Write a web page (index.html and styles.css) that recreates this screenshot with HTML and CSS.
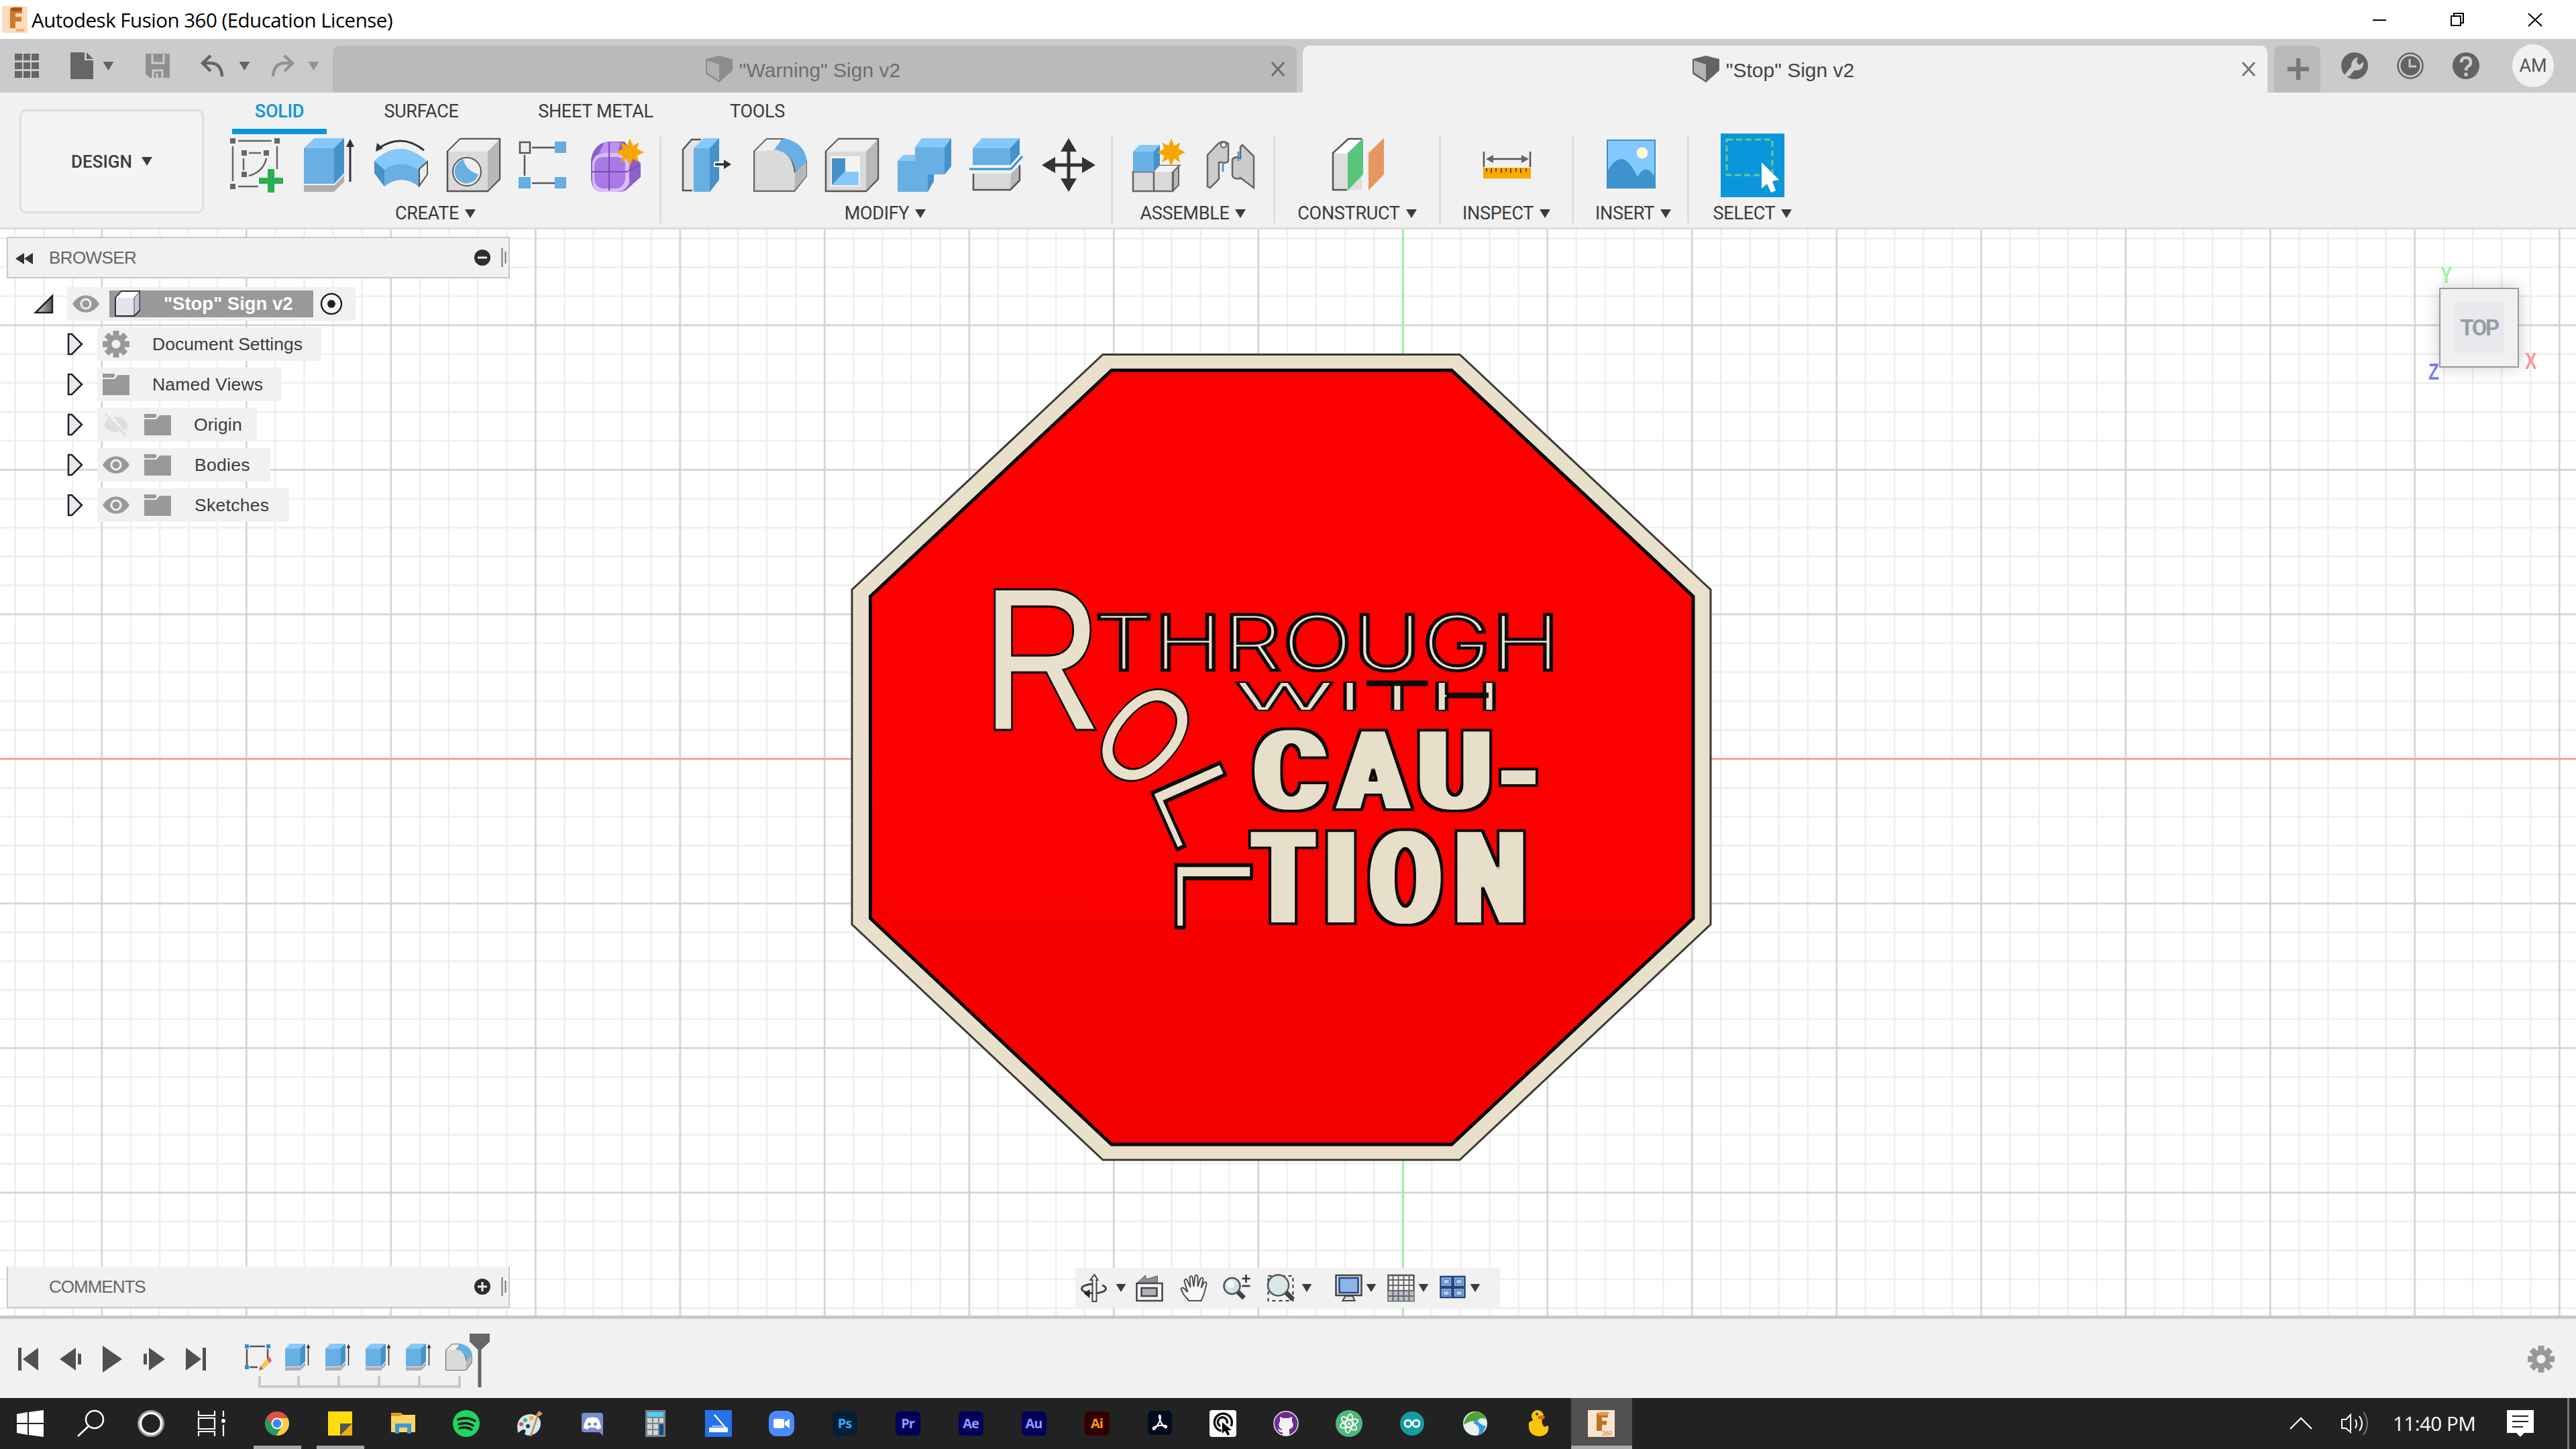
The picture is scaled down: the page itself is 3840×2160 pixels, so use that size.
FILE: index.html
```html
<!DOCTYPE html>
<html lang="en">
<head>
<meta charset="utf-8">
<title>Autodesk Fusion 360 (Education License)</title>
<link rel="stylesheet" href="styles.css">
</head>
<body>
<svg class="defs" width="0" height="0" aria-hidden="true">
  <defs>
    <symbol id="caret" viewBox="0 0 16 13"><path d="M0 0h16L8 13z" fill="currentColor"/></symbol>
    <symbol id="doc-cube" viewBox="0 0 40 40"><path d="M0 5 20 0 40 5 40 22 20 40 0 27z" fill="var(--cube-dark)"/><path d="M2 7 20 13V37L2 25z" fill="var(--cube-light)"/></symbol>
    <symbol id="close" viewBox="0 0 22 22"><path d="M2 1 20 21M20 1 2 21" stroke="currentColor" stroke-width="3" fill="none"/></symbol>
    <symbol id="gear" viewBox="-20 -20 40 40"><g fill="currentColor"><rect x="-4.5" y="-20" width="9" height="40"/><rect x="-4.5" y="-20" width="9" height="40" transform="rotate(45)"/><rect x="-4.5" y="-20" width="9" height="40" transform="rotate(90)"/><rect x="-4.5" y="-20" width="9" height="40" transform="rotate(135)"/><circle r="14"/></g><circle r="6.5" fill="#f1f1f1"/></symbol>
    <symbol id="eye" viewBox="0 0 40 26"><path d="M0 13C10-4 30-4 40 13 30 30 10 30 0 13z" fill="#999"/><circle cx="20" cy="13" r="7" fill="none" stroke="#f1f1f1" stroke-width="3"/></symbol>
    <symbol id="eye-off" viewBox="0 0 40 34"><path d="M2 18Q5 10 10 8L25 28Q10 30 2 18zM16 5Q32 4 38 18 36 23 32 26z" fill="#dedede"/><path d="M4 1 34 33" stroke="#dedede" stroke-width="3"/></symbol>
    <symbol id="folder" viewBox="0 0 40 34"><path d="M0 1h17l2 3-3 3H0z" fill="#999"/><path d="M0 9h18l5-6h17v30H0z" fill="#999"/></symbol>
    <symbol id="expand" viewBox="0 0 24 34"><path d="M2 2h5L22 17 7 32H2z" fill="#e8e9ee" stroke="#222" stroke-width="2.5"/></symbol>
    <symbol id="extrude" viewBox="0 0 80 80"><path d="M2 15 18 0H62V52L47 68H2z" fill="#68b0e4"/><path d="M2 15 18 0H62L47 15z" fill="#87c8fa"/><path d="M47 15 62 0V52L47 68z" fill="#4592cb"/><path d="M2 70H48L62 55V65L47 80H2z" fill="#aeaeae"/><path d="M71 65V8" stroke="#333" stroke-width="3"/><path d="M65 13 71 1 77 13z" fill="#333"/></symbol>
    <symbol id="fillet" viewBox="0 0 80 80"><path d="M1 20 20 1H45L35 14C55 22 60 35 62 50L79 35V56L61 79H1z" fill="#dadada" stroke="#666" stroke-width="2.5"/><path d="M2 20 20 2H42L31 17Q16 20 2 20z" fill="#efefef"/><path d="M62 50 79 35V56L61 78z" fill="#b8b8b8"/><path d="M31 17 45 0Q76 6 80 34L64 50Q58 21 31 17z" fill="#68b0e4"/></symbol>
    <symbol id="star" viewBox="-20 -20 40 40"><path d="M0-20 4-9 13-14 10-5 20 0 10 5 13 14 4 9 0 20-4 9-13 14-10 5-20 0-10-5-13-14-4-9z" fill="#f9a500"/></symbol>
    <pattern id="minor" width="43.1" height="43.1" patternUnits="userSpaceOnUse" x="2089.8" y="1129.8"><path d="M1.5 0V43.1M0 1.5H43.1" stroke="#000" stroke-opacity=".065" stroke-width="2.4"/></pattern>
    <pattern id="major" width="215.5" height="215.5" patternUnits="userSpaceOnUse" x="2089.8" y="1129.8"><path d="M1.5 0V215.5M0 1.5H215.5" stroke="#000" stroke-opacity=".12" stroke-width="2.6"/></pattern>
    <linearGradient id="red" x1="0" y1="0" x2="0" y2="1"><stop offset=".4" stop-color="#f00"/><stop offset="1" stop-color="#f40000"/></linearGradient>
    <filter id="heavy" filterUnits="userSpaceOnUse" x="1840" y="1050" width="480" height="360" color-interpolation-filters="sRGB">
      <feMorphology in="SourceAlpha" operator="dilate" radius="7 0" result="body"/>
      <feMorphology in="body" operator="dilate" radius="2" result="outer"/>
      <feMorphology in="body" operator="erode" radius="2" result="inner"/>
      <feFlood flood-color="#0a0a08"/><feComposite in2="outer" operator="in" result="edge"/>
      <feFlood flood-color="#e8dfca"/><feComposite in2="inner" operator="in" result="face"/>
      <feMerge><feMergeNode in="edge"/><feMergeNode in="face"/></feMerge>
    </filter>
  </defs>
</svg>

<header class="titlebar">
  <svg class="app-logo" viewBox="0 0 38 40"><rect width="38" height="40" fill="#fbdcbc"/><path d="M12 4h18v7H20v5h9v7h-9v10h-8z" fill="#d17a2c"/><path d="M12 4l3-2h15v3l-3 3H16z" fill="#a9550f"/><path d="M21 34h12v4H21z" fill="#f6ad6a"/></svg>
  <span class="title">Autodesk Fusion 360 (Education License)</span>
  <div class="window-controls">
    <svg viewBox="0 0 22 22"><path d="M1 12h20" stroke="#000" stroke-width="2"/></svg>
    <svg viewBox="0 0 22 22"><path d="M2 6h14v14H2zM6 6V2h14v14h-4" fill="none" stroke="#000" stroke-width="2"/></svg>
    <svg viewBox="0 0 22 22"><path d="M1 2 21 21M21 2 1 21" stroke="#000" stroke-width="2"/></svg>
  </div>
</header>

<nav class="tabbar">
  <div class="quick">
    <svg class="q" viewBox="0 0 36 36"><path d="M0 0h11v10H0zm13 0h10v10H13zm12 0h11v10H25zM0 13h11v10H0zm13 0h10v10H13zm12 0h11v10H25zM0 26h11v10H0zm13 0h10v10H13zm12 0h11v10H25z" fill="#666"/></svg>
    <svg class="q file" viewBox="0 0 34 40"><path d="M0 0h21v12h13v28H0z" fill="#666"/><path d="M24 0 34 10H24z" fill="#666"/></svg>
    <svg class="c"><use href="#caret"/></svg>
    <svg class="q" viewBox="0 0 36 36"><path d="M0 0h36v36H6L0 30z" fill="#8f8f8f"/><path d="M10 1v13h17V1M11 36V25h14v11M17 29v7" fill="none" stroke="#cbcbcb" stroke-width="3"/></svg>
    <svg class="q" viewBox="0 0 36 36"><path d="M15 3 3 14 15 26M3 14H14Q31 14 32 34" fill="none" stroke="#666" stroke-width="4.5"/></svg>
    <svg class="c"><use href="#caret"/></svg>
    <svg class="q" viewBox="0 0 36 36"><path d="M20 3 32 14 20 26M32 14H21Q4 14 3 34" fill="none" stroke="#929292" stroke-width="4.5"/></svg>
    <svg class="c dim"><use href="#caret"/></svg>
  </div>
  <div class="tab inactive"><div class="tab-label"><svg><use href="#doc-cube"/></svg><span>"Warning" Sign v2</span></div><svg class="x"><use href="#close"/></svg></div>
  <div class="tab active"><div class="tab-label"><svg><use href="#doc-cube"/></svg><span>"Stop" Sign v2</span></div><svg class="x"><use href="#close"/></svg></div>
  <div class="tab add"><svg viewBox="0 0 34 34"><path d="M17 1V33M1 17H33" stroke="#777" stroke-width="6.5"/></svg></div>
  <div class="account">
    <svg viewBox="0 0 40 40"><circle cx="20" cy="20" r="20" fill="#636363"/><path d="M9 34 18 23" stroke="#cbcbcb" stroke-width="7" /><path d="M16 25Q12 12 25 7L23 15 27 19 33 14Q34 27 21 27z" fill="#cbcbcb"/><path d="M2 40 14 28" stroke="#cbcbcb" stroke-width="5"/></svg>
    <svg viewBox="0 0 40 40"><circle cx="20" cy="20" r="18.5" fill="none" stroke="#636363" stroke-width="2.5"/><circle cx="20" cy="20" r="14.5" fill="#636363"/><path d="M19 10V21H29" fill="none" stroke="#cbcbcb" stroke-width="3"/></svg>
    <svg viewBox="0 0 40 40"><circle cx="20" cy="20" r="20" fill="#636363"/><path d="M13 15Q13 8 20 8T27 15Q27 19 23 21 20 23 20 27" fill="none" stroke="#cbcbcb" stroke-width="4.5"/><circle cx="20" cy="33" r="2.8" fill="#cbcbcb"/></svg>
    <span class="avatar">AM</span>
  </div>
</nav>

<section class="ribbon">
  <button class="workspace">DESIGN <svg class="c"><use href="#caret"/></svg></button>
  <div class="ribbon-main">
    <div class="ribbon-tabs"><span class="rt on">SOLID</span><span class="rt">SURFACE</span><span class="rt">SHEET METAL</span><span class="rt">TOOLS</span></div>
    <div class="groups">
      <div class="group create">
        <div class="icons">
          <svg viewBox="0 0 80 80"><g fill="none" stroke="#666" stroke-width="2.5"><path d="M12 4H62M4 12V64M70 12V46M12 72H42M28 22H46M20 30V48M54 30Q50 50 28 56"/></g><path d="M0 0h8v8H0zM66 0h8v8h-8zM0 68h8v8H0zM17 18h8v8h-8zM50 18h8v8h-8zM17 50h8v8h-8z" fill="#666"/><path d="M56 46h10v13h13v9H66v13H56V68H43v-9h13z" fill="#27b050"/></svg>
          <svg><use href="#extrude"/></svg>
          <svg viewBox="0 0 80 80"><path d="M0 34Q38-2 78 34L66 47V72Q40 52 15 72L0 52z" fill="#68b0e4"/><path d="M0 34Q38-2 78 34L66 47Q40 30 15 47z" fill="#87c8fa"/><path d="M0 34 15 47V72L0 52z" fill="#4592cb"/><path d="M67 46 79 35V54L67 71z" fill="#eee" stroke="#555" stroke-width="2"/><path d="M74 18Q42-8 8 14" fill="none" stroke="#333" stroke-width="3"/><path d="M2 20 4 7 13 15z" fill="#333"/></svg>
          <svg viewBox="0 0 80 80"><path d="M1 20 20 1H79V61L61 79H1z" fill="#dadada" stroke="#555" stroke-width="2.5"/><path d="M2 20 20 2H77L61 20z" fill="#efefef"/><path d="M61 20 78 3V60L61 78z" fill="#b8b8b8"/><circle cx="30" cy="50" r="21" fill="#eee" stroke="#555" stroke-width="2"/><path d="M25 32Q28 48 47 54A18 18 0 1 1 25 32z" fill="#68b0e4"/></svg>
          <svg viewBox="0 0 80 80"><path d="M20 14H54M9 25V56M20 67H54" stroke="#555" stroke-width="2.5"/><path d="M2 6h15v16H2z" fill="#eee" stroke="#555" stroke-width="2.5"/><path d="M54 5h17v17H54zM0 58h18v17H0zM54 58h17v17H54z" fill="#62aee5"/></svg>
          <svg viewBox="0 0 80 80"><path d="M15 8 25 5H50L74 38V58L54 76Q50 80 40 80H15Q1 78 0 60V32Q2 16 15 8z" fill="#8e5fc9"/><path d="M12 22 20 6H44L40 22z" fill="#bd92f7"/><path d="M2 36Q6 22 20 22H40Q54 22 57 36V68Q50 80 38 80H15Q2 78 2 62z" fill="#d8bcff"/><path d="M5 38Q8 28 18 28H38Q49 28 51 38V62Q48 74 38 75H17Q5 72 5 60z" fill="#a97ae4"/><path d="M27 6V78M2 50H54L72 40" fill="none" stroke="#7b4bb8" stroke-width="2"/><svg x="37" y="0" width="42" height="42"><use href="#star"/></svg></svg>
        </div><span class="gl">CREATE <svg class="c"><use href="#caret"/></svg></span>
      </div>
      <div class="group modify">
        <div class="icons">
          <svg viewBox="0 0 80 80"><path d="M3 17 16 2H32V78H3z" fill="#e4e4e4"/><path d="M30 2H16L3 17V78H17" fill="none" stroke="#555" stroke-width="2.5"/><path d="M19 80V15L35 0H57V62L43 80z" fill="#68b0e4"/><path d="M19 15 35 0H57L43 15z" fill="#87c8fa"/><path d="M43 15 57 0V62L43 80z" fill="#4592cb"/><path d="M49 39H66" stroke="#fff" stroke-width="8"/><path d="M51 39H66" stroke="#333" stroke-width="3.5"/><path d="M64 32 75 39 64 46z" fill="#333"/></svg>
          <svg><use href="#fillet"/></svg>
          <svg viewBox="0 0 80 80"><path d="M1 20 20 1H79V61L61 79H1z" fill="#dadada" stroke="#555" stroke-width="2.5"/><path d="M2 20 20 2H77L61 20z" fill="#efefef"/><path d="M61 20 78 3V60L61 78z" fill="#b8b8b8"/><path d="M8 27H52V72H8z" fill="#f4f4f4"/><path d="M10 30H30V52L10 70z" fill="#4592cb"/><path d="M10 70 29 50H50V70z" fill="#87c8fa"/></svg>
          <svg viewBox="0 0 80 80"><path d="M0 34 9 25H26V14L36 0H80V42L70 54H54V64L45 80H0z" fill="#68b0e4"/><path d="M0 34 9 25H26V34zM26 14 36 0H80L70 14z" fill="#87c8fa"/><path d="M70 14 80 0V42L70 54zM45 80V54H54V64z" fill="#4592cb"/></svg>
          <svg viewBox="0 0 80 80"><path d="M5 15 19 0H75V24L61 40H5z" fill="#68b0e4"/><path d="M5 15 19 0H75L61 15z" fill="#87c8fa"/><path d="M61 15 75 0V24L61 40z" fill="#4592cb"/><path d="M0 46H62L79 27" fill="none" stroke="#2e93dc" stroke-width="3"/><path d="M6 53H62L75 40V63L61 77H6z" fill="#d9d9d9"/><path d="M62 53 75 40V63L61 77z" fill="#b8b8b8"/><path d="M6 53V77H61L75 63V40" fill="none" stroke="#555" stroke-width="2.5"/></svg>
          <svg viewBox="0 0 80 80"><path d="M40 10V70M10 40H70" stroke="#333" stroke-width="5"/><path d="M40 0 52 20H28zM40 80 28 60H52zM0 40 20 28V52zM80 40 60 52V28z" fill="#333"/></svg>
        </div><span class="gl">MODIFY <svg class="c"><use href="#caret"/></svg></span>
      </div>
      <div class="group assemble">
        <div class="icons">
          <svg viewBox="0 0 80 80"><path d="M1 50H32V79H1zM32 50 40 41H70L60 50V79H32z" fill="#dadada" stroke="#666" stroke-width="2.5"/><path d="M32 50 40 41H68L60 50z" fill="#f2f2f2"/><path d="M61 50 69 42V70L61 78z" fill="#b8b8b8" stroke="#666" stroke-width="2"/><path d="M1 20 11 10H41V40L32 50H1z" fill="#68b0e4"/><path d="M1 20 11 10H41L32 20z" fill="#87c8fa"/><path d="M32 20 41 10V40L32 50z" fill="#4592cb"/><svg x="37" y="0" width="42" height="42"><use href="#star"/></svg></svg>
          <svg viewBox="0 0 80 80"><g stroke="#666" stroke-width="2.5" fill="#ccc"><path d="M5 25 20 9Q28 2 36 8V34Q34 38 26 36L22 36V61L9 74 5 72z"/><path d="M74 74 54 59V60Q42 62 42 54V32Q46 26 54 30V13L57 10 74 27z"/></g><circle cx="29" cy="10" r="4" fill="#eee" stroke="#666" stroke-width="2"/><path d="M28 36V50M51 20V34" stroke="#2e93dc" stroke-width="2.5"/></svg>
        </div><span class="gl">ASSEMBLE <svg class="c"><use href="#caret"/></svg></span>
      </div>
      <div class="group construct">
        <div class="icons"><svg viewBox="0 0 80 80"><path d="M1 22 24 1H44V77H1z" fill="#dedede"/><path d="M1 22 24 2H44L24 23z" fill="#fff"/><path d="M44 1H24L1 22V77H22" fill="none" stroke="#555" stroke-width="2.5"/><path d="M23 22 46 0V54L23 78z" fill="#5ac47a"/><path d="M54 22 77 0V54L54 78z" fill="#e69661"/></svg></div><span class="gl">CONSTRUCT <svg class="c"><use href="#caret"/></svg></span>
      </div>
      <div class="group inspect">
        <div class="icons"><svg viewBox="0 0 80 80"><path d="M6 20V43M75 20V43M12 31H70" stroke="#555" stroke-width="2.5" fill="none"/><path d="M9 31 20 25V37zM73 31 62 25V37z" fill="#666"/><path d="M5 44H76V60H5z" fill="#f9a900"/><path d="M10 45v5M17 45v7M24 45v5M32 45v7M39 45v5M46 45v7M54 45v5M61 45v7M69 45v5" stroke="#664b00" stroke-width="2"/></svg></div><span class="gl">INSPECT <svg class="c"><use href="#caret"/></svg></span>
      </div>
      <div class="group insert">
        <div class="icons"><svg viewBox="0 0 80 80"><path d="M5 3H76V74H5z" fill="#82c9fd" stroke="#3a8ecb" stroke-width="2"/><path d="M5 50Q15 31 26 31T50 58Q62 35 76 58V74H5z" fill="#3d93cf"/><circle cx="57" cy="22" r="8.5" fill="#fff9d0"/></svg></div><span class="gl">INSERT <svg class="c"><use href="#caret"/></svg></span>
      </div>
      <div class="group select">
        <div class="icons"><svg class="sel" viewBox="0 0 95 95"><path d="M0 0H95V95H0z" fill="#0b96db"/><path d="M9 9H77V62H9z" fill="none" stroke="#62cf86" stroke-width="3" stroke-dasharray="9 5"/><path d="M61 43V82L69 75 75 88 82 85 77 71 87 69z" fill="#fff"/></svg></div><span class="gl">SELECT <svg class="c"><use href="#caret"/></svg></span>
      </div>
    </div>
  </div>
</section>

<main class="canvas">
  <svg class="scene" viewBox="0 342 3840 1619">
    <rect y="342" width="3840" height="1619" fill="#fff"/>
    <rect y="342" width="3840" height="1619" fill="url(#minor)"/>
    <rect y="342" width="3840" height="1619" fill="url(#major)"/>
    <path d="M0 1131.3H3840" stroke="#f99" stroke-width="2.4"/>
    <path d="M2091.3 342V1961" stroke="#8df58d" stroke-width="2.4"/>
    <path d="M1644 528.5H2176L2550 879V1378L2176 1729H1644L1270 1378V879z" fill="#e9e0cb" stroke="#3a3a36" stroke-width="3"/>
    <path d="M1657 552H2164L2524 889V1369L2164 1706H1657L1297.5 1369V889z" fill="url(#red)" stroke="#000" stroke-width="5"/>
    <g class="sign-text">
      <text class="roll" font-size="300" transform="translate(1484.5 1086.500) scale(.825 1)" x="-25" y="0">R</text>
      <text class="roll" font-size="209" transform="translate(1706.7 1096) rotate(40) scale(.7 1)" x="-81.500" y="72">O</text>
      <text class="thin" font-size="161" transform="translate(1717.5 1182) rotate(66) scale(1.295 1)" x="-13.2" y="0">L</text>
      <text class="thin" font-size="163" transform="translate(1753 1289.5) rotate(90) scale(1.295 1)" x="-13.4" y="0">L</text>
      <text class="through" font-size="114" x="1631" y="999" textLength="695" lengthAdjust="spacingAndGlyphs">THROUGH</text>
      <g transform="translate(1843 1059) scale(2.45 1)"><text class="with" font-size="62" x="0 60.4 79 117" y="0">WITH</text></g>
      <path d="M2037 1018.5H2128M2156 1036.500H2219" stroke="#0a0a08" stroke-width="8"/>
      <g class="fat" filter="url(#heavy)">
        <text font-size="167" y="1207"><tspan x="1869.600" textLength="107" lengthAdjust="spacingAndGlyphs">C</tspan><tspan x="1995" textLength="104" lengthAdjust="spacingAndGlyphs">A</tspan><tspan x="2113" textLength="111" lengthAdjust="spacingAndGlyphs">U</tspan><tspan class="hyphen" x="2235" textLength="57" lengthAdjust="spacingAndGlyphs">-</tspan></text>
        <text font-size="194" y="1377"><tspan x="1867" textLength="92" lengthAdjust="spacingAndGlyphs">T</tspan><tspan x="1973.500" textLength="51" lengthAdjust="spacingAndGlyphs">I</tspan><tspan x="2042" textLength="106" lengthAdjust="spacingAndGlyphs">O</tspan><tspan x="2169.600" textLength="104" lengthAdjust="spacingAndGlyphs">N</tspan></text>
      </g>
    </g>
  </svg>

  <div class="viewcube">
    <span class="ax y">Y</span><span class="ax z">Z</span><span class="ax x">X</span>
    <div class="cube-face"><span>TOP</span></div>
  </div>

  <aside class="browser">
    <div class="panel-head">
      <svg class="rew" viewBox="0 0 26 17"><path d="M13 0V17L0 8.500zM26 0V17L13 8.500z" fill="#333"/></svg>
      <span>BROWSER</span>
      <svg class="dot" viewBox="0 0 24 24"><circle cx="12" cy="12" r="12" fill="#2e2e2e"/><path d="M5 12H19" stroke="#eee" stroke-width="3"/></svg>
      <svg class="grip" viewBox="0 0 8 28"><path d="M1.500 0V28M6.500 5V23" stroke="#777" stroke-width="2"/></svg>
    </div>
    <div class="row root">
      <svg class="tri" viewBox="0 0 30 30"><defs><linearGradient id="tg"><stop stop-color="#ddd"/><stop offset="1" stop-color="#555"/></linearGradient></defs><path d="M2 28 27 3V28z" fill="url(#tg)" stroke="#222" stroke-width="2.500"/></svg>
      <div class="pill">
        <svg class="eye"><use href="#eye"/></svg>
        <span class="name"><svg viewBox="0 0 40 40"><path d="M2 11 11 1H38V30L30 38H2z" fill="#e3e5ee" stroke="#333" stroke-width="2"/><path d="M3 11 11 2H37L30 11z" fill="#fff"/><path d="M30 11 38 2V29L30 37z" fill="#c5c8d4" stroke="#444" stroke-width="1"/></svg>"Stop" Sign v2</span>
        <svg class="radio" viewBox="0 0 34 34"><circle cx="17" cy="17" r="15" fill="#fafafa" stroke="#222" stroke-width="2.500"/><circle cx="17" cy="17" r="6" fill="#222"/></svg>
      </div>
    </div>
    <div class="row"><svg class="exp"><use href="#expand"/></svg><div class="pill"><svg class="g"><use href="#gear"/></svg><span>Document Settings</span></div></div>
    <div class="row"><svg class="exp"><use href="#expand"/></svg><div class="pill"><svg class="f"><use href="#folder"/></svg><span>Named Views</span></div></div>
    <div class="row"><svg class="exp"><use href="#expand"/></svg><div class="pill tight"><svg class="eo"><use href="#eye-off"/></svg><svg class="f"><use href="#folder"/></svg><span>Origin</span></div></div>
    <div class="row"><svg class="exp"><use href="#expand"/></svg><div class="pill"><svg class="eye"><use href="#eye"/></svg><svg class="f"><use href="#folder"/></svg><span>Bodies</span></div></div>
    <div class="row"><svg class="exp"><use href="#expand"/></svg><div class="pill"><svg class="eye"><use href="#eye"/></svg><svg class="f"><use href="#folder"/></svg><span>Sketches</span></div></div>
  </aside>

  <div class="panel-head comments">
    <span>COMMENTS</span>
    <svg class="dot" viewBox="0 0 24 24"><circle cx="12" cy="12" r="12" fill="#2e2e2e"/><path d="M5 12H19M12 5V19" stroke="#eee" stroke-width="3"/></svg>
    <svg class="grip" viewBox="0 0 8 28"><path d="M1.500 0V28M6.500 5V23" stroke="#777" stroke-width="2"/></svg>
  </div>

  <div class="navbar">
    <svg viewBox="0 0 40 40"><ellipse cx="20" cy="21" rx="18" ry="7" fill="none" stroke="#444" stroke-width="3" stroke-dasharray="62 12 12"/><path d="M18 40V8H15L21 0 26 8H24V40z" fill="#f4f4f4" stroke="#444" stroke-width="2"/><path d="M5 28 14 22V35z" fill="#222"/></svg>
    <svg class="c"><use href="#caret"/></svg>
    <svg viewBox="0 0 40 40"><path d="M1 13H39V39H1z" fill="#f8f8f8" stroke="#444" stroke-width="2.500"/><path d="M2 12 14 1 15 7 32 2V12z" fill="#8b919c" stroke="#555"/><path d="M8 20H31V32H8z" fill="#aeb2bb" stroke="#444" stroke-width="2.500"/></svg>
    <svg viewBox="0 0 40 40"><path d="M13 39 5 30 1 22Q1 19 5 20L11 26 6 10Q7 5 10 8L15 19 14 4Q16 0 18 4L20 18 22 2Q24-1 26 3V18L30 6Q33 3 34 7L31 20 35 12Q39 10 39 14L35 30 31 39z" fill="#f7f7f8" stroke="#4b4f55" stroke-width="2"/></svg>
    <svg viewBox="0 0 40 40"><path d="M21 25 31 35" stroke="#38414c" stroke-width="7"/><circle cx="13" cy="17" r="12" fill="#cfe3e3" stroke="#48525e" stroke-width="2.500"/><circle cx="11" cy="14" r="6" fill="#f4fafa"/><path d="M34 0V12M28 6H40M28 17H40" stroke="#333" stroke-width="2.500"/></svg>
    <svg viewBox="0 0 40 40"><path d="M2 2H39V39H2z" fill="none" stroke="#333" stroke-width="2" stroke-dasharray="5 5"/><path d="M28 26 39 37" stroke="#444" stroke-width="7"/><circle cx="17" cy="16" r="15.500" fill="#d5eae8" stroke="#555" stroke-width="2.500"/></svg>
    <svg class="c"><use href="#caret"/></svg>
    <svg viewBox="0 0 40 40"><path d="M1 1H39V31H1z" fill="#dadde3" stroke="#444" stroke-width="2.500"/><path d="M6 5H34V27H6z" fill="#8fb5e6" stroke="#24467f" stroke-width="2.500"/><path d="M15 32H26L29 39H11z" fill="#ddd" stroke="#444" stroke-width="2"/></svg>
    <svg class="c"><use href="#caret"/></svg>
    <svg viewBox="0 0 40 40"><path d="M1 1H39V39H1z" fill="#f4f5f8" stroke="#555" stroke-width="2.500"/><path d="M1 24H39V39H1z" fill="#b9bfcd"/><path d="M8 1V39M16 1V39M24 1V39M32 1V39M1 8H39M1 16H39M1 24H39M1 32H39" stroke="#666" stroke-width="2"/></svg>
    <svg class="c"><use href="#caret"/></svg>
    <svg viewBox="0 0 40 40"><path d="M2 3H19V18H2zM21 3H38V18H21zM2 20H19V34H2zM21 20H38V34H21z" fill="#8fb5e6" stroke="#24467f" stroke-width="2.500"/><path d="M6 7h9v7H6zM25 7h9v7h-9zM6 24h9v7H6zM25 24h9v7h-9z" fill="#b0ccf0" stroke="#4f79b5" stroke-width="1.500"/></svg>
    <svg class="c"><use href="#caret"/></svg>
  </div>
</main>

<footer class="timeline">
  <div class="transport">
    <svg viewBox="0 0 32 40"><path d="M1 3h5v34H1zM31 3V37L8 20z" fill="#505052"/></svg>
    <svg viewBox="0 0 32 40"><path d="M24 3V37L0 20zM27 12h5v16h-5z" fill="#505052"/></svg>
    <svg viewBox="0 0 32 40"><path d="M2 0V40L31 20z" fill="#505052"/></svg>
    <svg viewBox="0 0 32 40"><path d="M8 3V37L32 20zM0 12h5v16H0z" fill="#505052"/></svg>
    <svg viewBox="0 0 32 40"><path d="M1 3V37L24 20zM26 3h5v34h-5z" fill="#505052"/></svg>
  </div>
  <div class="track">
    <div class="features">
      <svg viewBox="0 0 40 40"><path d="M8 4H31M4 8V32M35 8V22M8 35H20" stroke="#555" stroke-width="2.500"/><path d="M1 1h6v6H1zM33 1h6v6h-6zM1 32h6v6H1z" fill="#2490e3"/><path d="M24 34 34 22 39 27 28 39z" fill="#fcc04c"/><path d="M34 22 37 19 41 25 38 29z" fill="#f04e58"/><path d="M22 40 24 33 28 38z" fill="#777"/></svg>
      <svg><use href="#extrude"/></svg>
      <svg><use href="#extrude"/></svg>
      <svg><use href="#extrude"/></svg>
      <svg><use href="#extrude"/></svg>
      <svg><use href="#fillet"/></svg>
    </div>
    <svg class="bracket" viewBox="0 0 302 18"><path d="M2 0V16H300V0M60 0V16M120 0V16M180 0V16M240 0V16" fill="none" stroke="#c9c9c9" stroke-width="4"/></svg>
    <svg class="marker" viewBox="0 0 30 80"><path d="M0 0H30V12L17.500 24V80H12.500V24L0 12z" fill="#666"/></svg>
  </div>
  <svg class="settings"><use href="#gear"/></svg>
</footer>

<div class="taskbar">
  <div class="system">
    <svg viewBox="0 0 40 40"><path d="M0 6 16 3V19H0zM18 3 40 0V19H18zM0 21H16V37L0 34zM18 21H40V40L18 37z" fill="#fff"/></svg>
    <svg viewBox="0 0 40 40"><circle cx="26" cy="14" r="13" fill="none" stroke="#fff" stroke-width="2.500"/><path d="M17 24 1 39" stroke="#fff" stroke-width="2.500"/></svg>
    <svg viewBox="0 0 40 40"><circle cx="20" cy="20" r="18.500" fill="none" stroke="#999" stroke-width="3"/><circle cx="20" cy="20" r="15.500" fill="none" stroke="#fff" stroke-width="3.500"/></svg>
    <svg viewBox="0 0 40 40"><path d="M1 1V8H25V1M1 12H25V28H1zM1 39V32H25V39M38 1V10M38 22V39" fill="none" stroke="#fff" stroke-width="2.200"/><circle cx="38" cy="16" r="3" fill="#fff"/></svg>
  </div>
  <div class="apps">
    <div class="app run"><svg viewBox="0 0 40 40"><circle cx="20" cy="20" r="18" fill="#de5246"/><path d="M4.400 11A18 18 0 0 0 19 38L27 24H13z" fill="#1aa260"/><path d="M20 12H36A18 18 0 0 1 19 38L27 24z" fill="#ffce44"/><circle cx="20" cy="20" r="8.500" fill="#fff"/><circle cx="20" cy="20" r="6.500" fill="#4587f0"/></svg></div>
    <div class="app run"><svg viewBox="0 0 40 40"><path d="M2 2H38V38H2z" fill="#ffdc0c"/><path d="M20 20H38L20 38z" fill="#555"/><path d="M38 20V38H20z" fill="#eab10a"/></svg></div>
    <div class="app"><svg viewBox="0 0 40 40"><path d="M2 4H17L20 8V14H2z" fill="#e09b12"/><path d="M2 9H15L19 7H38V33H2z" fill="#ffd461"/><path d="M8 35V20H32V35H26V26H14V35z" fill="#3d97dd"/></svg></div>
    <div class="app"><svg viewBox="0 0 40 40"><circle cx="20" cy="20" r="20" fill="#1ed760"/><path d="M8 14Q21 9 33 16M9 21Q21 17 30 23M10 27Q20 24 28 29" fill="none" stroke="#191414" stroke-width="3.500" stroke-linecap="round"/></svg></div>
    <div class="app"><svg viewBox="0 0 40 40"><path d="M2 24Q4 7 22 6 38 8 37 22 34 37 18 38L13 36Q17 28 10 29L3 34z" fill="#cfe8f4"/><circle cx="8" cy="21" r="3" fill="#e5473b"/><circle cx="14" cy="15" r="3" fill="#53b24c"/><circle cx="23" cy="12" r="3.500" fill="#f3b72b"/><circle cx="18" cy="24" r="3" fill="#2b3c4e"/><path d="M22 39 33 7" stroke="#dc8535" stroke-width="2.500"/><path d="M30 8 34 1 40 5 36 9z" fill="#d5985a"/></svg></div>
    <div class="app"><svg viewBox="0 0 40 40"><path d="M4 8Q4 4 8 4H32Q36 4 36 8V38L30 33H8Q4 33 4 29z" fill="#7a8bd2"/><path d="M12 12Q20 9 28 12 33 20 33 27L27 29 25 26H15L13 29 7 27Q7 20 12 12z" fill="#fff"/><circle cx="15.500" cy="21" r="2.500" fill="#7585cb"/><circle cx="24.500" cy="21" r="2.500" fill="#7585cb"/></svg></div>
    <div class="app"><svg viewBox="0 0 40 40"><path d="M5 0H35V40H5z" fill="#7b8288"/><path d="M8 3H32V10H8z" fill="#4dd0f5"/><path d="M8 12h7v7H8zM17 12h7v7h-7zM26 12h6v7h-6zM8 21h7v7H8zM17 21h7v7h-7zM8 30h7v7H8zM17 30h7v7h-7z" fill="#d3d6d9"/><path d="M26 21h6v16h-6z" fill="#124a8d"/></svg></div>
    <div class="app"><svg viewBox="0 0 40 40"><path d="M0 0H40V40H0z" fill="#2672e9"/><path d="M14 7 31 27" stroke="#fff" stroke-width="2.500"/><path d="M6 26H34V33H6z" fill="#fff"/><path d="M10 23H28V25H10z" fill="#a8c6fa"/></svg></div>
    <div class="app"><svg viewBox="0 0 40 40"><rect x="1" y="1" width="38" height="38" rx="12" fill="#4a8cff"/><rect x="8" y="13" width="16" height="14" rx="3" fill="#fff"/><path d="M25 18 32 13V27L25 22z" fill="#fff"/></svg></div>
    <div class="app"><span class="adobe ps">Ps</span></div>
    <div class="app"><span class="adobe pr">Pr</span></div>
    <div class="app"><span class="adobe pr">Ae</span></div>
    <div class="app"><span class="adobe pr">Au</span></div>
    <div class="app"><span class="adobe ai">Ai</span></div>
    <div class="app"><svg viewBox="0 0 40 40"><rect x="2" y="1" width="36" height="36" rx="6" fill="#000c1d"/><path d="M10 28C6 24 32 20 30 25S19 16 19 10 24 10 18 20 11 30 10 28z" fill="none" stroke="#fff" stroke-width="2.200"/></svg></div>
    <div class="app"><svg viewBox="0 0 40 40"><rect width="40" height="40" rx="4" fill="#fff"/><path d="M18 31A13 13 0 1 1 32 24M16 24A7 7 0 1 1 26 20" fill="none" stroke="#111" stroke-width="3.500"/><path d="M19 18V35L23 31 27 38 30 36 27 30H33z" fill="#000"/></svg></div>
    <div class="app"><svg viewBox="0 0 40 40"><circle cx="20" cy="20" r="18" fill="#6c2c93" stroke="#ece6f0" stroke-width="1.500"/><path d="M11 10 16 12H24L29 10V17Q34 26 25 28V38H15V33Q9 34 8 27 12 31 15 29 6 25 11 17z" fill="#f5f2f7"/></svg></div>
    <div class="app"><svg viewBox="0 0 40 40"><circle cx="20" cy="20" r="20" fill="#4fb87c"/><g fill="none" stroke="#fff" stroke-width="1.800"><ellipse cx="20" cy="20" rx="5" ry="14" transform="rotate(10 20 20)"/><ellipse cx="20" cy="20" rx="5" ry="14" transform="rotate(70 20 20)"/><ellipse cx="20" cy="20" rx="5" ry="14" transform="rotate(130 20 20)"/></g><circle cx="20" cy="20" r="2" fill="#fff"/></svg></div>
    <div class="app"><svg viewBox="0 0 40 40"><circle cx="20" cy="20" r="18" fill="#159ba1"/><circle cx="14" cy="20" r="5" fill="none" stroke="#fff" stroke-width="2.800"/><circle cx="26" cy="20" r="5" fill="none" stroke="#fff" stroke-width="2.800"/></svg></div>
    <div class="app"><svg viewBox="0 0 40 40"><circle cx="20" cy="20" r="18" fill="#e6f0f4"/><path d="M3 22Q5 5 22 2 34 5 36 14 26 8 22 20 17 12 3 22z" fill="#4fa52c"/><path d="M21 8Q22 20 36 24 32 36 24 38 30 24 18 20z" fill="#359bdc"/></svg></div>
    <div class="app"><svg viewBox="0 0 40 40"><circle cx="19" cy="9" r="9" fill="#fbc70d"/><path d="M6 22Q5 17 11 16L14 12H26Q24 20 29 25L35 23Q37 38 21 39 5 38 6 22z" fill="#fbc70d"/><path d="M20 9Q29 6 30 11 27 16 20 13z" fill="#e8651b"/><circle cx="18" cy="6" r="2" fill="#333"/></svg></div>
    <div class="app current run"><svg viewBox="0 0 40 40"><path d="M0 0H40V40H0z" fill="#fbe4cf"/><path d="M13 5H30V11H21V16H28V22H21V31H13z" fill="#c06f28"/><path d="M13 5 16 3H31L30 8H17z" fill="#e29b54"/><text x="21" y="38" font-size="9" font-family="Roboto, sans-serif" fill="#e07a22">360</text></svg></div>
  </div>
  <div class="tray">
    <svg class="chev" viewBox="0 0 34 18"><path d="M1 17 17 1 33 17" fill="none" stroke="#fff" stroke-width="2.200"/></svg>
    <svg class="vol" viewBox="0 0 40 40"><path d="M1 14H7L14 7V33L7 27H1z" fill="none" stroke="#fff" stroke-width="2"/><path d="M21 14Q25 20 21 27M27 9Q35 20 27 31" fill="none" stroke="#fff" stroke-width="2"/><path d="M33 3Q45 20 33 37" fill="none" stroke="#777" stroke-width="2"/></svg>
    <span class="clock">11:40 PM</span>
    <svg class="note" viewBox="0 0 40 40"><path d="M0 0H40V34H26L20 40 14 34H0z" fill="#fff"/><path d="M8 9H32M8 17H32M8 25H24" stroke="#222" stroke-width="2"/></svg>
    <i class="desk"></i>
  </div>
</div>
</body>
</html>
```
FILE: styles.css
```css
* { box-sizing: border-box; }
body {
  margin: 0;
  width: 3840px;
  height: 2160px;
  overflow: hidden;
  display: flex;
  flex-direction: column;
  font-family: "Liberation Sans", Arial, sans-serif;
  color: #3c3c3c;
  background: #fff;
}
.defs { position: absolute; }
svg { display: block; flex: none; overflow: visible; }
.c { width: 16px; height: 13px; }

/* window title */
.titlebar { height: 58px; flex: none; display: flex; align-items: center; padding-left: 3px; }
.app-logo { width: 38px; height: 40px; }
.title { margin-left: 6px; font: 29.5px "Open Sans", sans-serif; color: #000; white-space: nowrap; padding-bottom: 0; letter-spacing: -0.5px; }
.window-controls { margin-left: auto; display: flex; gap: 94px; padding-right: 50px; }
.window-controls svg { width: 22px; height: 22px; }

/* document tabs */
.tabbar { height: 80px; flex: none; display: flex; align-items: flex-end; background: #cbcbcb; }
.quick { width: 496px; height: 80px; display: grid; grid-template-columns: 83px 48px 64px 82px 57px 48px 55px 20px; padding-left: 22px; align-items: center; color: #636363; }
.quick .q { width: 36px; height: 36px; }
.quick .file { width: 34px; height: 40px; }
.quick .c { width: 17px; }
.quick .dim { color: #929292; }
.tab { height: 70px; border-radius: 10px 10px 0 0; display: flex; align-items: center; font-size: 30px; }
.tab-label { flex: 1; display: flex; align-items: center; justify-content: center; gap: 10px; padding-left: 4px; padding-top: 3px; }
.tab-label svg { width: 40px; height: 40px; margin-top: -4px; }
.tab .x { width: 22px; height: 22px; margin-right: 17px; }
.inactive { width: 1437px; background: #bababa; color: #6e6e6e; --cube-dark: #8d8d8d; --cube-light: #b0b0b0; }
.active { width: 1438px; margin-left: 9px; background: #f1f1f1; color: #444; --cube-dark: #646464; --cube-light: #b4b4b4; }
.active .x { color: #777; }
.add { width: 69px; margin-left: 10px; background: #bababa; justify-content: center; padding-left: 2px; }
.add svg { width: 34px; height: 34px; }
.account { height: 80px; display: flex; align-items: center; gap: 43px; padding-left: 31px; }
.account svg { width: 40px; height: 40px; }
.avatar { width: 62px; height: 64px; margin-left: 6px; border-radius: 50%; background: #f1f1f1; display: grid; place-items: center; font: 27px Roboto, sans-serif; color: #555; }

/* ribbon */
.ribbon { height: 204px; flex: none; display: flex; background: #f1f1f1; border-bottom: 3px solid #dcdcdc; font-family: Roboto, sans-serif; }
.workspace { width: 275px; height: 155px; margin: 25px 11px 0 29px; background: #f4f4f4; border: 3px solid #dedede; border-radius: 10px; font: 500 26px Roboto, sans-serif; color: #3c3c3c; display: flex; align-items: center; justify-content: center; gap: 14px; padding: 0; }
.ribbon-main { display: flex; flex-direction: column; }
.ribbon-tabs { display: flex; padding-left: 31px; height: 65px; font-size: 27px; gap: 46px; }
.rt { padding-top: 11px; height: 62px; line-height: 34px; text-align: center; letter-spacing: -0.3px; }
.rt.on { color: #0b96db; font-weight: 500; width: 141px; border-bottom: 8px solid #0b96db; }
.rt:nth-child(2) { width: 190px; }
.rt:nth-child(3) { width: 234px; margin-left: 2px; }
.rt:nth-child(4) { width: 160px; margin-left: -2px; }
.groups { display: flex; height: 130px; }
.group { border-right: 3px solid #dedede; display: flex; flex-direction: column; align-items: center; position: relative; }
.icons { height: 80px; margin-top: 3px; display: flex; align-items: center; gap: 27.5px; }
.icons > svg { width: 80px; height: 80px; }
.icons > .sel { width: 95px; height: 95px; }
.gl { margin-top: 16px; display: flex; align-items: center; gap: 9px; font-size: 27px; line-height: 32px; letter-spacing: -0.3px; }
.create { width: 671px; }
.create .icons, .assemble .icons, .construct .icons { padding-left: 6px; }
.modify { width: 673px; padding-right: 3px; }
.modify .icons { padding-left: 9px; }
.assemble { width: 242px; }
.construct { width: 247px; }
.inspect { width: 198px; }
.insert { width: 172px; }
.insert .gl { padding-left: 8px; }
.select { width: 189px; border: 0; }

/* modelling canvas */
.canvas { height: 1619px; flex: none; position: relative; }
.scene { width: 3840px; height: 1619px; }
.sign-text { fill: #e9e0cb; stroke: #0a0a08; }
.thin, .with, .roll { font-family: "Liberation Sans", Arial, sans-serif; stroke-width: 4.5px; }
.roll { stroke-width: 6.5px; paint-order: stroke; }
.with { stroke-width: 2.1px; }
.through { font-family: Inter, sans-serif; font-weight: 300; stroke-width: 4.5px; }
.fat { font-family: Roboto, sans-serif; font-weight: 900; stroke: none; }
.hyphen { font-family: Inter, sans-serif; }

.viewcube { position: absolute; left: 3636px; top: 87px; width: 119px; height: 119px; }
.cube-face { width: 119px; height: 119px; background: #f0f0f0; border: 2px solid #999; box-shadow: 0 0 22px rgba(0,0,0,.2); display: grid; place-items: center; position: relative; }
.cube-face span { width: 74px; height: 75px; background: #e8e9ed; color: #999da4; display: grid; place-items: center; font: 700 33px Roboto, sans-serif; letter-spacing: -2.5px; }
.ax { position: absolute; font-size: 35px; line-height: 33px; font-weight: 700; transform: scaleX(.75); transform-origin: left; }
.ax.y { left: 2px; top: -36px; color: #a5f5a5; }
.ax.z { left: -16px; top: 108px; color: #8080fa; }
.ax.x { left: 128px; top: 92px; color: #f99; }

.browser { position: absolute; left: 10px; top: 11px; width: 750px; display: flex; flex-direction: column; gap: 10px; font-size: 26.5px; }
.panel-head { width: 750px; height: 62px; background: #f1f1f1; border: 2px solid #c8c8c8; display: flex; align-items: center; padding-right: 3px; font: 26px "Liberation Sans", sans-serif; letter-spacing: -0.6px; color: #666; }
.panel-head span { margin-right: auto; }
.rew { width: 26px; height: 17px; margin: 3px 24px 0 11px; }
.dot { width: 24px; height: 24px; }
.grip { width: 8px; height: 28px; margin-left: 16px; }
.comments { position: absolute; left: 10px; top: 1546px; border-top: 0; padding-left: 61px; letter-spacing: -1px; }
.row { height: 50px; display: flex; align-items: center; padding-left: 90px; }
.pill { height: 50px; background: #f1f1f1; display: flex; align-items: center; padding: 0 28px 0 8px; }
.exp { width: 24px; height: 34px; margin-right: 21px; }
.pill .g { width: 40px; height: 40px; color: #999; }
.eye { width: 40px; height: 26px; }
.eo { width: 40px; height: 34px; }
.f { width: 40px; height: 34px; }
.pill svg + .f { margin-left: 22px; }
.pill .g + span, .f + span { margin-left: 34px; white-space: nowrap; }
.eye ~ .f + span { margin-left: 35px; letter-spacing: 0.3px; padding-right: 2px; }
.f + span { letter-spacing: 0.2px; }
.pill.tight { padding-right: 22px; }
.root { padding-left: 41px; margin-top: 3px; }
.tri { width: 30px; height: 30px; margin-right: 19px; }
.root .pill { padding-right: 19px; width: 430px; }
.name { height: 40px; width: 304px; margin-left: 15px; background: #999; color: #fff; font-weight: 700; font-size: 27.500px; display: flex; align-items: center; gap: 34px; padding-left: 7px; white-space: nowrap; }
.name svg { width: 40px; height: 40px; }
.radio { width: 34px; height: 34px; margin-left: 10px; }

.navbar { position: absolute; left: 1603px; top: 1548px; width: 633px; height: 60px; background: #f1f1f1; padding-left: 7px; display: grid; align-items: center; grid-template-columns: 53px 30px 66px 64px 65px 52px 50px 46px 32px 46px 31px 46px 16px; }
.navbar svg { width: 41px; height: 40px; }
.navbar .c { width: 16px; height: 12px; }

/* design timeline */
.timeline { height: 123px; flex: none; background: #f1f1f1; border-top: 5px solid #c8c8c8; display: flex; align-items: flex-start; }
.transport { display: flex; gap: 30.5px; padding: 40px 0 0 26px; }
.transport svg { width: 32px; height: 40px; }
.track { position: relative; padding: 37px 0 0 56px; }
.features { display: flex; gap: 20px; }
.features svg { width: 40px; height: 40px; }
.bracket { width: 302px; height: 18px; margin: 8px 0 0 21px; }
.marker { position: absolute; left: 392px; top: 22px; width: 30px; height: 80px; }
.settings { width: 40px; height: 40px; margin: 40px 32px 0 auto; color: #989898; }

/* desktop taskbar */
.taskbar { height: 76px; flex: none; background: #222; display: flex; }
.system { display: grid; grid-template-columns: repeat(4, 90px); place-items: center; margin-right: 6px; }
.system svg, .app svg { width: 40px; height: 40px; }
.apps { display: grid; grid-template-columns: repeat(22, 94px); }
.app { display: grid; place-items: center; border-bottom: 5px solid transparent; border-top: 5px solid transparent; margin-inline: 11.5px; }
.app.run { border-bottom-color: #aaa8a8; }
.app.current { background: #525150; border-top-color: #525150; margin-inline: 1.5px; }
.adobe { width: 37px; height: 36px; border-radius: 6px; font: 700 20px/35px "Open Sans", sans-serif; text-align: center; letter-spacing: -1px; }
.ps { background: #001e36; color: #31a8ff; }
.pr { background: #00005b; color: #9999ff; }
.ai { background: #330000; color: #ff9a00; }
.tray { margin-left: auto; display: flex; align-items: center; color: #fff; }
.chev { width: 34px; height: 18px; margin-right: 43px; }
.vol { width: 40px; height: 40px; }
.clock { width: 122px; margin: 0 48px 1px 37px; font: 29.500px "Open Sans", sans-serif; letter-spacing: -0.5px; white-space: nowrap; }
.note { width: 40px; height: 40px; }
.desk { width: 3px; height: 76px; background: #777; margin: 0 10px 0 50px; }
```
